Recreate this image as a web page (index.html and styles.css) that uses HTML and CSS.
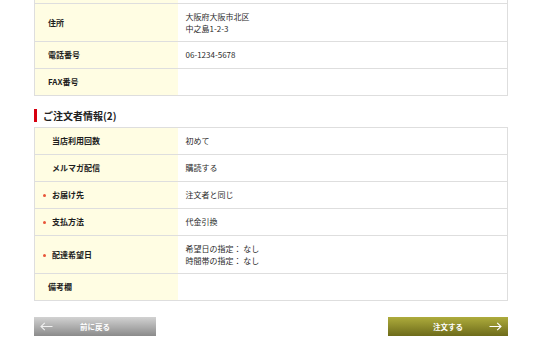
FILE: index.html
```html
<!DOCTYPE html>
<html lang="ja">
<head>
    <meta charset="UTF-8">
    <meta name="viewport" content="width=device-width, initial-scale=1.0">
    <title>ご注文内容の確認</title>
    <link rel="stylesheet" href="styles.css">
</head>
<body>

<main class="page">
    <table class="form-table">
        <tr>
            <th></th>
            <td></td>
        </tr>
        <tr class="tall">
            <th>住所</th>
            <td>大阪府大阪市北区<br>中之島1-2-3</td>
        </tr>
        <tr>
            <th>電話番号</th>
            <td>06-1234-5678</td>
        </tr>
        <tr>
            <th>FAX番号</th>
            <td></td>
        </tr>
    </table>

    <h2 class="section-title">ご注文者情報(2)</h2>

    <table class="form-table">
        <tr>
            <th class="indent">当店利用回数</th>
            <td>初めて</td>
        </tr>
        <tr>
            <th class="indent">メルマガ配信</th>
            <td>購読する</td>
        </tr>
        <tr>
            <th class="indent required">お届け先</th>
            <td>注文者と同じ</td>
        </tr>
        <tr>
            <th class="indent required">支払方法</th>
            <td>代金引換</td>
        </tr>
        <tr class="tall">
            <th class="indent required">配達希望日</th>
            <td>希望日の指定： なし<br>時間帯の指定： なし</td>
        </tr>
        <tr>
            <th>備考欄</th>
            <td></td>
        </tr>
    </table>

    <div class="actions">
        <button class="btn back-btn">
            <svg class="arrow" width="13" height="9" viewBox="0 0 13 9">
                <path d="M12.5 4.5H1M4.8 0.8L1 4.5l3.8 3.7" fill="none" stroke="currentColor" stroke-width="1.1"/>
            </svg>
            <span>前に戻る</span>
            <span></span>
        </button>
        <button class="btn order-btn">
            <span></span>
            <span>注文する</span>
            <svg class="arrow" width="13" height="9" viewBox="0 0 13 9">
                <path d="M0.5 4.5H12M8.2 0.8L12 4.5l-3.8 3.7" fill="none" stroke="currentColor" stroke-width="1.1"/>
            </svg>
        </button>
    </div>
</main>

</body>
</html>
```

FILE: styles.css
```css
* {
    box-sizing: border-box;
}

body {
    margin: 0;
    background: #fff;
    color: #2b2b2b;
    font-family: "Noto Sans CJK JP", "Noto Sans", sans-serif;
}

.page {
    width: 474px;
    margin: -24px 0 0 34px;
}

.form-table {
    width: 100%;
    border-collapse: collapse;
    border: 1px solid #dedede;
}

.form-table tr {
    height: 27px;
}

.form-table tr.tall {
    height: 38px;
}

.form-table th,
.form-table td {
    border-bottom: 1px solid #dedede;
    font-size: 8px;
    line-height: 12px;
    text-align: left;
    vertical-align: middle;
    padding: 0;
}

.form-table th {
    width: 143px;
    background: #fffde3;
    font-weight: bold;
    padding-left: 13px;
    color: #1e1e1e;
}

.form-table th.indent {
    padding-left: 17px;
}

.form-table th.required {
    position: relative;
}

.form-table th.required::before {
    content: "";
    position: absolute;
    left: 8px;
    top: 50%;
    width: 3px;
    height: 3px;
    margin-top: -1px;
    border-radius: 50%;
    background: #e8553a;
}

.form-table td {
    padding-left: 8px;
}

.section-title {
    margin: 13px 0 5px;
    padding-left: 6px;
    border-left: 3px solid #d7000f;
    font-size: 10px;
    line-height: 13px;
    font-weight: bold;
    color: #222;
}

.actions {
    display: flex;
    justify-content: space-between;
    margin-top: 16px;
}

.btn {
    display: grid;
    grid-template-columns: 1fr auto 1fr;
    align-items: center;
    height: 19px;
    padding: 0 6px;
    border: none;
    color: #fff;
    font-family: inherit;
    font-size: 7.5px;
    font-weight: bold;
    cursor: pointer;
}

.btn .arrow {
    display: block;
}

.back-btn {
    width: 122px;
    background: linear-gradient(#d2d2d2, #8b8b8b);
}

.back-btn .arrow {
    justify-self: start;
    color: #f0f0f0;
}

.order-btn {
    width: 120px;
    background: linear-gradient(#aeac3c, #6d6b1a);
}

.order-btn .arrow {
    justify-self: end;
}
```
